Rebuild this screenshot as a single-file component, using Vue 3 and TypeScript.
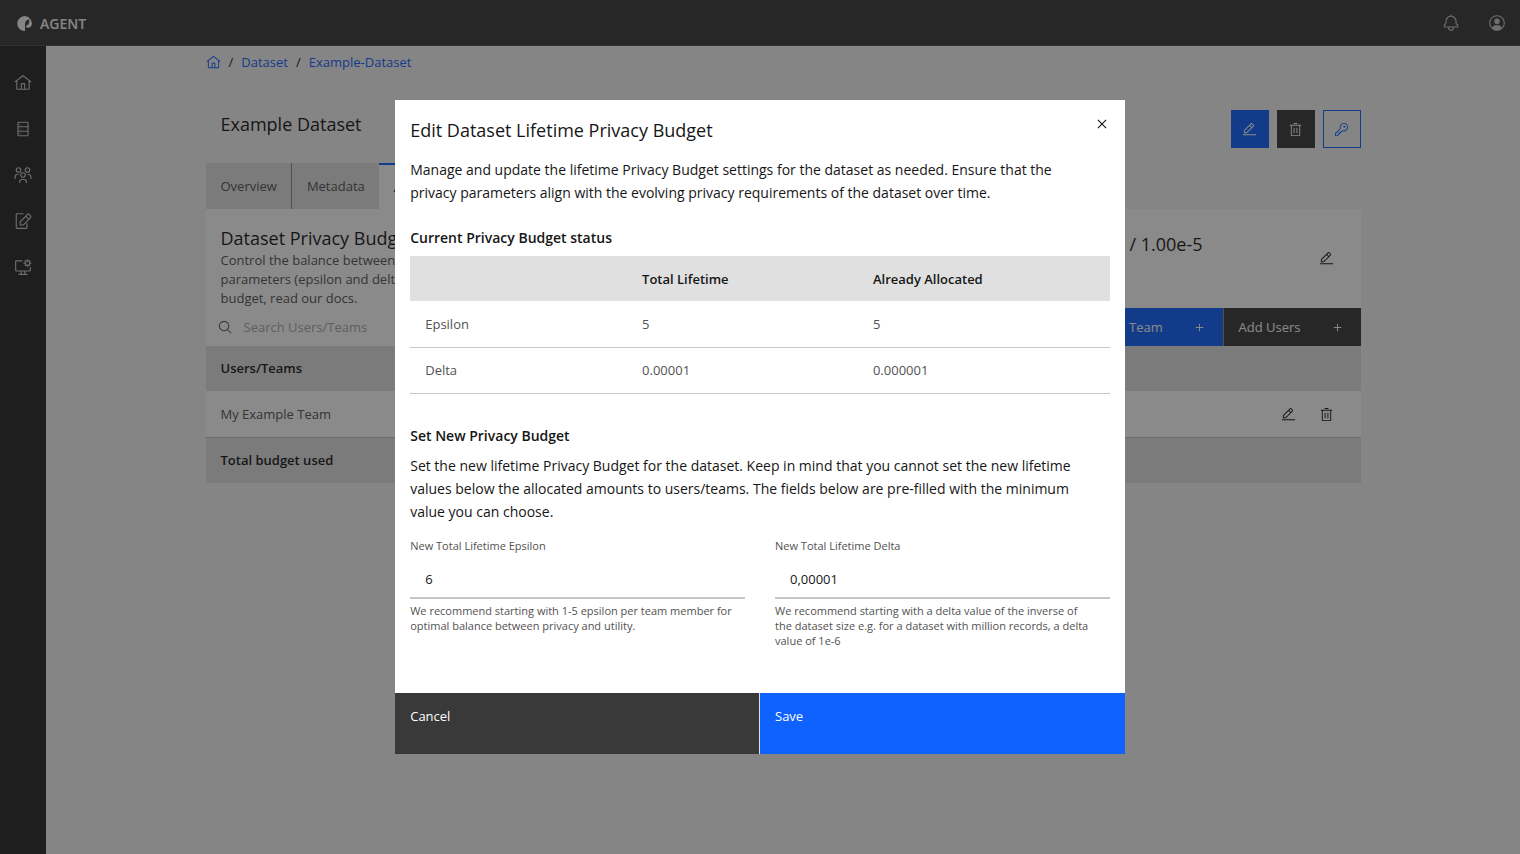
<script setup lang="ts">
import { ref } from 'vue'

interface NavItem {
  label: string
  paths: string[]
}

interface BudgetRow {
  name: string
  total: string
  allocated: string
}

const icons = {
  home: 'M16.6123,2.2138a1.01,1.01,0,0,0-1.2427,0L1,13.4194l1.2427,1.5717L4,13.6208V26a2.0041,2.0041,0,0,0,2,2H26a2.0037,2.0037,0,0,0,2-2V13.63L29.7573,15,31,13.4282ZM18,26H14V18h4Zm2,0V18a2.0023,2.0023,0,0,0-2-2H14a2.002,2.002,0,0,0-2,2v8H6V12.0615l10-7.79,10,7.8005V26Z',
  edit: 'M2 26H30V28H2z M25.4 9c.8-.8.8-2 0-2.8l-3.6-3.6c-.8-.8-2-.8-2.8 0l-15 15V24h6.4L25.4 9z M20.4 4L24 7.6l-3 3L17.4 7 20.4 4z M6 22v-3.6l10-10 3.6 3.6-10 10H6z',
  trash: 'M12 12H14V24H12z M18 12H20V24H18z M4 6V8H6V28a2 2 0 002 2H24a2 2 0 002-2V8h2V6zM8 28V8H24V28zM12 2H20V4H12z',
  bell: 'M28.7071,19.293,26,16.5859V13a10.0136,10.0136,0,0,0-9-9.9492V1H15V3.0508A10.0136,10.0136,0,0,0,6,13v3.5859L3.2929,19.293A1,1,0,0,0,3,20v3a1,1,0,0,0,1,1h7v.7768a5.152,5.152,0,0,0,4.5,5.1987A5.0057,5.0057,0,0,0,21,25V24h7a1,1,0,0,0,1-1V20A1,1,0,0,0,28.7071,19.293ZM19,25a3,3,0,0,1-6,0V24h6Zm8-3H5V20.4141L7.707,17.707A1,1,0,0,0,8,17V13a8,8,0,0,1,16,0v4a1,1,0,0,0,.293.707L27,20.4141Z',
  user: 'M16,8a5,5,0,1,0,5,5A5,5,0,0,0,16,8Z M16,2A14,14,0,1,0,30,16,14.0158,14.0158,0,0,0,16,2Zm7.992,22.9258A5.0016,5.0016,0,0,0,19,20H13a5.0016,5.0016,0,0,0-4.992,4.9258,12,12,0,1,1,15.984,0Z',
  search: 'M29,27.5859l-7.5521-7.5521a11.0177,11.0177,0,1,0-1.4141,1.4141L27.5859,29ZM4,13a9,9,0,1,1,9,9A9.01,9.01,0,0,1,4,13Z',
  close: 'M17.4141 16L24 9.4141 22.5859 8 16 14.5859 9.4143 8 8 9.4141 14.5859 16 8 22.5859 9.4143 24 16 17.4141 22.5859 24 24 22.5859 17.4141 16z',
  add: 'M17 15L17 8 15 8 15 15 8 15 8 17 15 17 15 24 17 24 17 17 24 17 24 15z',
  key: 'M21,2a8.9977,8.9977,0,0,0-8.6119,11.6118L2,24v6H8L18.3881,19.6118A9,9,0,1,0,21,2Zm0,16a7.0125,7.0125,0,0,1-2.0322-.3022L17.821,17.35l-.8472.8472-3.1811,3.1812L12.4141,20,11,21.4141l1.3787,1.3786-1.5859,1.586L9.4141,23,8,24.4141l1.3787,1.3786L7.1716,28H4V24.8284l9.8023-9.8023.8472-.8474-.3473-1.1467A7,7,0,1,1,21,18Z M24 10a2 2 0 1 1-4 0a2 2 0 0 1 4 0z',
}

const navItems: NavItem[] = [
  { label: 'Home', paths: [icons.home] },
  {
    label: 'Datasets',
    paths: [
      'M24 3H8A2 2 0 006 5V27a2 2 0 002 2H24a2 2 0 002-2V5A2 2 0 0024 3zm0 2v6H8V5zM8 19V13H24v6zm0 8V21H24v6z',
      'M12 8a1 1 0 1 1-2 0a1 1 0 0 1 2 0z M12 16a1 1 0 1 1-2 0a1 1 0 0 1 2 0z M12 24a1 1 0 1 1-2 0a1 1 0 0 1 2 0z',
    ],
  },
  {
    label: 'Teams',
    paths: [
      'M26,14H24v2h2a3.0033,3.0033,0,0,1,3,3v4h2V19A5.0058,5.0058,0,0,0,26,14Z M24,4a3,3,0,1,1-3,3,3,3,0,0,1,3-3m0-2a5,5,0,1,0,5,5A5,5,0,0,0,24,2Z',
      'M23,30H21V28a3.0033,3.0033,0,0,0-3-3H14a3.0033,3.0033,0,0,0-3,3v2H9V28a5.0059,5.0059,0,0,1,5-5h4a5.0059,5.0059,0,0,1,5,5Z M16,13a3,3,0,1,1-3,3,3,3,0,0,1,3-3m0-2a5,5,0,1,0,5,5A5,5,0,0,0,16,11Z',
      'M8,14H6a5.0059,5.0059,0,0,0-5,5v4H3V19a3.0033,3.0033,0,0,1,3-3H8Z M8,4A3,3,0,1,1,5,7,3,3,0,0,1,8,4M8,2a5,5,0,1,0,5,5A5,5,0,0,0,8,2Z',
    ],
  },
  {
    label: 'Requests',
    paths: [
      'M22 30H5a2 2 0 0 1-2-2V4a2 2 0 0 1 2-2h12v2H5v24h17v-8h2v8a2 2 0 0 1-2 2z',
      'M29.7 5.9l-3.6-3.6a1 1 0 0 0-1.4 0L10 17v7h6.9L29.7 11.3a3.8 3.8 0 0 0 0-5.4zM16 22h-4v-4l9-9 4 4zm10.4-10.4l-4-4 3-3 4 4z',
    ],
  },
  {
    label: 'Compute settings',
    paths: [
      'M28 16v6H4V6h11V4H4a2 2 0 0 0-2 2v16a2 2 0 0 0 2 2h8v4H8v2h16v-2h-4v-4h8a2 2 0 0 0 2-2v-6zM18 28h-4v-4h4z',
      'M31 10V8h-2.1a5 5 0 0 0-.7-1.8l1.5-1.5-1.4-1.4-1.5 1.5A5 5 0 0 0 25 4.1V2h-2v2.1a5 5 0 0 0-1.8.7l-1.5-1.5-1.4 1.4 1.5 1.5A5 5 0 0 0 19.100 8H17v2h2.1a5 5 0 0 0 .7 1.800l-1.5 1.5 1.4 1.4 1.5-1.5a5 5 0 0 0 1.8.7V16h2v-2.100a5 5 0 0 0 1.8-.7l1.5 1.5 1.4-1.4-1.5-1.5a5 5 0 0 0 .7-1.800zM24 12a3 3 0 1 1 0-6a3 3 0 0 1 0 6z',
    ],
  },
]

const budgetRows: BudgetRow[] = [
  { name: 'Epsilon', total: '5', allocated: '5' },
  { name: 'Delta', total: '0.00001', allocated: '0.000001' },
]

const search = ref('')
const epsilon = ref('6')
const delta = ref('0,00001')
</script>

<template>
  <div class="app">
    <header class="topbar">
      <a class="brand" href="#">
        <svg class="logo" viewBox="0 0 16 16" aria-hidden="true">
          <path d="M8 0A8 8 0 1 0 8.600 16V9C8.600 6 10 4.200 12.800 3.800V1.600A8 8 0 0 0 8 0z" />
          <path d="M13 1.800A8 8 0 0 1 16 8C16 10.800 14 12.600 11.500 12.600C10.600 12.600 10 12.300 9.600 11.800V10.300C12 10 13.500 7.500 13 1.800z" />
        </svg>
        <span>AGENT</span>
      </a>
      <div class="topbar-actions">
        <button type="button" aria-label="Notifications">
          <svg class="icon-lg" viewBox="0 0 32 32"><path :d="icons.bell" /></svg>
        </button>
        <button type="button" aria-label="Account">
          <svg class="icon-lg" viewBox="0 0 32 32"><path :d="icons.user" /></svg>
        </button>
      </div>
    </header>

    <div class="body">
      <nav class="sidebar" aria-label="Main">
        <a v-for="item in navItems" :key="item.label" href="#" :aria-label="item.label">
          <svg class="icon-lg" viewBox="0 0 32 32">
            <path v-for="p in item.paths" :key="p" :d="p" fill-rule="evenodd" />
          </svg>
        </a>
      </nav>

      <main class="main">
        <div class="content">
          <nav class="breadcrumb" aria-label="Breadcrumb">
            <a href="#" aria-label="Home"><svg class="icon" viewBox="0 0 32 32"><path :d="icons.home" /></svg></a>
            <span>/</span>
            <a href="#">Dataset</a>
            <span>/</span>
            <a href="#">Example-Dataset</a>
          </nav>

          <div class="title-row">
            <h1>Example Dataset</h1>
            <div class="title-actions">
              <button type="button" class="square primary" aria-label="Edit dataset">
                <svg class="icon" viewBox="0 0 32 32"><path :d="icons.edit" fill-rule="evenodd" /></svg>
              </button>
              <button type="button" class="square dark" aria-label="Delete dataset">
                <svg class="icon" viewBox="0 0 32 32"><path :d="icons.trash" /></svg>
              </button>
              <button type="button" class="square outline" aria-label="Dataset key">
                <svg class="icon" viewBox="0 0 32 32"><path :d="icons.key" /></svg>
              </button>
            </div>
          </div>

          <div class="tabs" role="tablist">
            <button type="button" role="tab" aria-selected="false">Overview</button>
            <button type="button" role="tab" aria-selected="false">Metadata</button>
            <button type="button" role="tab" aria-selected="true" class="active">Access</button>
          </div>

          <section class="panel">
            <div class="panel-head">
              <div>
                <h2>Dataset Privacy Budget</h2>
                <p>
                  Control the balance between the<br />
                  parameters (epsilon and delta)<br />
                  budget, read our docs.
                </p>
              </div>
              <div class="panel-budget">
                <span>/ 1.00e-5</span>
                <button type="button" class="bare" aria-label="Edit privacy budget">
                  <svg class="icon" viewBox="0 0 32 32"><path :d="icons.edit" fill-rule="evenodd" /></svg>
                </button>
              </div>
            </div>

            <div class="toolbar">
              <label class="search">
                <svg class="icon" viewBox="0 0 32 32" aria-hidden="true"><path :d="icons.search" /></svg>
                <input v-model="search" type="search" placeholder="Search Users/Teams" aria-label="Search Users/Teams" />
              </label>
              <button type="button" class="tool primary">
                <span>Add Team</span>
                <svg class="icon" viewBox="0 0 32 32"><path :d="icons.add" /></svg>
              </button>
              <button type="button" class="tool dark">
                <span>Add Users</span>
                <svg class="icon" viewBox="0 0 32 32"><path :d="icons.add" /></svg>
              </button>
            </div>

            <table class="grid">
              <thead>
                <tr><th scope="col">Users/Teams</th><td class="actions-col"></td></tr>
              </thead>
              <tbody>
                <tr>
                  <td>My Example Team</td>
                  <td class="actions-col">
                    <div class="row-actions">
                      <button type="button" class="bare" aria-label="Edit team">
                        <svg class="icon" viewBox="0 0 32 32"><path :d="icons.edit" fill-rule="evenodd" /></svg>
                      </button>
                      <button type="button" class="bare" aria-label="Delete team">
                        <svg class="icon" viewBox="0 0 32 32"><path :d="icons.trash" /></svg>
                      </button>
                    </div>
                  </td>
                </tr>
              </tbody>
              <tfoot>
                <tr><th scope="row">Total budget used</th><td class="actions-col"></td></tr>
              </tfoot>
            </table>
          </section>
        </div>
      </main>
    </div>

    <div class="overlay">
      <form class="dialog" role="dialog" aria-modal="true" aria-labelledby="dialog-title" @submit.prevent>
        <div class="dialog-body">
          <div class="dialog-head">
            <h2 id="dialog-title">Edit Dataset Lifetime Privacy Budget</h2>
            <button type="button" class="close" aria-label="Close">
              <svg class="icon-lg" viewBox="0 0 32 32"><path :d="icons.close" /></svg>
            </button>
          </div>
          <p class="copy intro">
            Manage and update the lifetime Privacy Budget settings for the dataset as needed. Ensure that the privacy
            parameters align with the evolving privacy requirements of the dataset over time.
          </p>

          <h3>Current Privacy Budget status</h3>
          <table class="status">
            <thead>
              <tr>
                <td></td>
                <th scope="col">Total Lifetime</th>
                <th scope="col">Already Allocated</th>
              </tr>
            </thead>
            <tbody>
              <tr v-for="row in budgetRows" :key="row.name">
                <td>{{ row.name }}</td>
                <td>{{ row.total }}</td>
                <td>{{ row.allocated }}</td>
              </tr>
            </tbody>
          </table>

          <h3 class="set-new">Set New Privacy Budget</h3>
          <p class="copy">
            Set the new lifetime Privacy Budget for the dataset. Keep in mind that you cannot set the new lifetime
            values below the allocated amounts to users/teams. The fields below are pre-filled with the minimum value
            you can choose.
          </p>

          <div class="fields">
            <div class="field">
              <label for="epsilon">New Total Lifetime Epsilon</label>
              <input id="epsilon" v-model="epsilon" type="text" inputmode="decimal" aria-describedby="epsilon-help" />
              <p id="epsilon-help">
                We recommend starting with 1-5 epsilon per team member for optimal balance between privacy and utility.
              </p>
            </div>
            <div class="field">
              <label for="delta">New Total Lifetime Delta</label>
              <input id="delta" v-model="delta" type="text" inputmode="decimal" aria-describedby="delta-help" />
              <p id="delta-help" class="help-long">
                We recommend starting with a delta value of the inverse of the dataset size e.g. for a dataset with
                million records, a delta value of 1e-6
              </p>
            </div>
          </div>
        </div>
        <div class="dialog-footer">
          <button type="button" class="dark">Cancel</button>
          <button type="submit" class="primary">Save</button>
        </div>
      </form>
    </div>
  </div>
</template>

<style>
body {
  margin: 0;
  background: #f4f4f4;
}
</style>

<style scoped>
.app {
  display: flex;
  flex-direction: column;
  min-height: 100vh;
  background: #f4f4f4;
  color: #161616;
  font-family: "Open Sans", "Noto Sans", sans-serif;
  font-size: 13px;
  line-height: 19px;
}

.app *,
.app {
  box-sizing: border-box;
}

h1,
h2,
h3,
p {
  margin: 0;
}

h1,
h2 {
  font-size: 18px;
  font-weight: 400;
  line-height: 24px;
}

h3 {
  font-size: 14px;
  font-weight: 600;
  line-height: 23px;
}

a {
  color: inherit;
  text-decoration: none;
}

button {
  margin: 0;
  padding: 0;
  border: 0;
  border-radius: 0;
  background: none;
  color: inherit;
  font: inherit;
  text-align: left;
  cursor: pointer;
}

input {
  border: 0;
  outline: 0;
  background: none;
  color: inherit;
  font: inherit;
}

svg {
  display: block;
  flex: none;
  fill: currentColor;
}

.icon {
  width: 15px;
  height: 15px;
}

.icon-lg {
  width: 18px;
  height: 18px;
}

.primary {
  background: #0f62fe;
  color: #fff;
}

.dark {
  background: #393939;
  color: #fff;
}

.topbar {
  display: flex;
  align-items: center;
  justify-content: space-between;
  height: 46px;
  padding: 1px 14px 0 17px;
  border-bottom: 1px solid #4a4a4a;
  background: #393939;
  color: #f4f4f4;
}

.brand {
  display: flex;
  align-items: center;
  gap: 8px;
  font-size: 14px;
  font-weight: 600;
}

.logo {
  width: 15px;
  height: 15px;
}

.topbar-actions {
  display: flex;
  gap: 28px;
  color: #c6c6c6;
}

.body {
  display: flex;
  flex: 1;
}

.sidebar {
  display: flex;
  flex-direction: column;
  gap: 28px;
  flex: none;
  align-items: center;
  width: 46px;
  padding-top: 28px;
  background: #262626;
  color: #c6c6c6;
}

.main {
  flex: 1;
  min-width: 0;
  padding: 7px 16px;
}

.content {
  max-width: 1155px;
  margin: 0 auto;
}

.breadcrumb {
  display: flex;
  align-items: center;
  gap: 8px;
}

.breadcrumb a {
  color: #0f62fe;
}

.title-row {
  display: flex;
  align-items: flex-start;
  justify-content: space-between;
  padding: 38px 0 15px 15px;
}

.title-row h1 {
  padding-top: 2px;
}

.title-actions {
  display: flex;
  gap: 8px;
}

.square {
  display: grid;
  place-items: center;
  width: 38px;
  height: 38px;
}

.outline {
  border: 1px solid #0f62fe;
  color: #0f62fe;
}

.tabs {
  display: flex;
}

.tabs button {
  height: 46px;
  padding: 0 14px 0 15px;
  border-right: 1px solid #8d8d8d;
  background: #e0e0e0;
  color: #525252;
}

.tabs button:nth-child(2) {
  border-right: 0;
}

.tabs .active {
  border-top: 2px solid #0f62fe;
  border-right: 0;
  background: #fff;
  color: #161616;
  font-weight: 600;
}

.panel {
  background: #fff;
}

.panel-head {
  display: flex;
  align-items: flex-start;
  justify-content: space-between;
  min-height: 99px;
  padding: 17px 27px 0 15px;
}

.panel-head p {
  padding-top: 1px;
  color: #525252;
}

.panel-budget {
  display: flex;
  gap: 116px;
  padding-top: 6px;
  font-size: 18px;
  line-height: 24px;
}

.panel-budget .bare {
  margin-top: 19px;
}

.toolbar {
  display: flex;
  height: 38px;
}

.search {
  display: flex;
  flex: 1;
  align-items: center;
  gap: 11px;
  padding-left: 12px;
  color: #525252;
}

.search input {
  width: 200px;
  padding: 0;
}

.search input::placeholder {
  color: #a8a8a8;
  opacity: 1;
}

.tool {
  display: flex;
  align-items: center;
  justify-content: space-between;
  width: 137px;
  padding: 0 16px 0 15px;
}

.tool.primary {
  border-right: 1px solid #8d8d8d;
}

.grid {
  width: 100%;
  border-collapse: collapse;
  color: #525252;
}

.grid tr {
  height: 46px;
}

.grid thead tr {
  height: 45px;
}

.grid th,
.grid td {
  padding: 0 15px;
  text-align: left;
}

.grid th {
  color: #161616;
  font-weight: 600;
}

.grid thead,
.grid tfoot {
  background: #e0e0e0;
}

.grid tbody tr {
  border-bottom: 1px solid #c6c6c6;
}

.grid tbody td {
  padding-top: 1px;
}

.grid .actions-col {
  width: 116px;
  padding-right: 27px;
  padding-left: 0;
}

.row-actions {
  display: flex;
  justify-content: flex-end;
  gap: 23px;
  color: #161616;
}

.overlay {
  position: fixed;
  inset: 0;
  display: flex;
  align-items: center;
  justify-content: center;
  background: rgba(22, 22, 22, 0.5);
}

.dialog {
  width: 48%;
  min-width: 640px;
  background: #fff;
  font-size: 14px;
  line-height: 23px;
}

.dialog-body {
  padding: 18px 15px 45px;
}

.dialog-head {
  display: flex;
  align-items: flex-start;
  justify-content: space-between;
}

.close {
  margin: -3px -1px 0 0;
}

.copy {
  padding-right: 24px;
}

.intro {
  margin: 16px 0 22px;
}

.status {
  width: 100%;
  margin-top: 7px;
  border-collapse: collapse;
  table-layout: fixed;
  color: #525252;
  font-size: 13px;
  line-height: 19px;
}

.status tr {
  height: 46px;
}

.status thead tr {
  height: 45px;
}

.status th,
.status td {
  width: 33%;
  padding: 1px 15px 0;
  text-align: left;
}

.status td:first-child {
  width: 31%;
}

.status th:last-child {
  width: 36%;
}

.status th {
  color: #161616;
  font-weight: 600;
}

.status thead {
  background: #e0e0e0;
}

.status tbody tr {
  border-bottom: 1px solid #c6c6c6;
}

.set-new {
  margin: 30px 0 7px;
}

.fields {
  display: grid;
  grid-template-columns: 1fr 1fr;
  gap: 30px;
  margin-top: 15px;
}

.field {
  color: #525252;
  font-size: 11px;
  line-height: 15px;
}

.field label {
  display: block;
}

.field input {
  display: block;
  width: 100%;
  height: 38px;
  margin: 8px 0 4px;
  padding: 0 15px;
  border-bottom: 2px solid #c6c6c6;
  color: #161616;
  font-size: 13px;
}

.help-long {
  padding-right: 16px;
}

.dialog-footer {
  display: grid;
  grid-template-columns: 1fr 1fr;
  height: 61px;
}

.dialog-footer button {
  padding: 0 15px 14px;
  font-size: 13px;
}

.dialog-footer .dark {
  border-right: 1px solid #e0e0e0;
}
</style>
